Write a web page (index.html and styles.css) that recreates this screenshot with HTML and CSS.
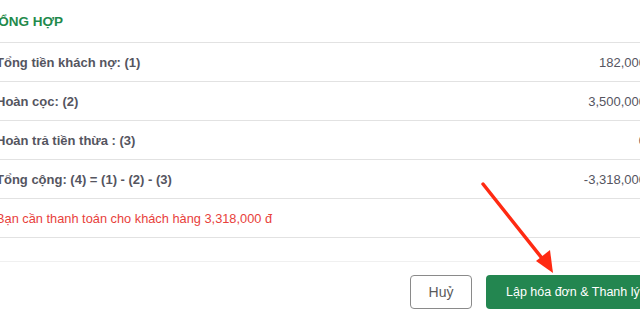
FILE: index.html
```html
<!DOCTYPE html>
<html lang="vi">
<head>
    <meta charset="UTF-8">
    <meta name="viewport" content="width=device-width, initial-scale=1.0">
    <title>Tổng hợp thanh lý</title>
    <link rel="stylesheet" href="styles.css">
</head>
<body>
    <div class="panel">
        <div class="panel-title">TỔNG HỢP</div>

        <div class="summary">
            <div class="summary-row">
                <span class="label">Tổng tiền khách nợ: (1)</span>
                <span class="value">182,000</span>
            </div>
            <div class="summary-row">
                <span class="label">Hoàn cọc: (2)</span>
                <span class="value">3,500,000</span>
            </div>
            <div class="summary-row">
                <span class="label">Hoàn trả tiền thừa : (3)</span>
                <span class="value">0</span>
            </div>
            <div class="summary-row">
                <span class="label">Tổng cộng: (4) = (1) - (2) - (3)</span>
                <span class="value">-3,318,000</span>
            </div>
            <div class="summary-row note">
                <span>Bạn cần thanh toán cho khách hàng 3,318,000 đ</span>
            </div>
            <div class="summary-gap"></div>
        </div>

        <div class="panel-footer">
            <button class="btn btn-cancel" type="button">Huỷ</button>
            <button class="btn btn-primary" type="button">Lập hóa đơn &amp; Thanh lý hợp đồng</button>
        </div>
    </div>

    <!-- annotation arrow pointing at the main button -->
    <svg class="arrow" width="640" height="316" viewBox="0 0 640 316">
        <line x1="483" y1="184" x2="545" y2="262" stroke="#ff2a12" stroke-width="3.5" stroke-linecap="round"/>
        <polygon points="553,273 536,261 550,250" fill="#ff2a12"/>
    </svg>
</body>
</html>
```

FILE: styles.css
```css
/* Page frame: the panel is wider than the window and clipped on both sides */
body {
    margin: 0;
    width: 640px;
    height: 316px;
    overflow: hidden;
    position: relative;
    background: #fff;
    font-family: "Liberation Sans", Arial, Helvetica, sans-serif;
    color: #555;
}

.panel {
    width: 650px;
    margin-left: -4px;
}

/* Title */
.panel-title {
    height: 43px;
    padding-top: 14px;
    box-sizing: border-box;
    text-indent: -6px;
    font-size: 13.5px;
    font-weight: bold;
    color: #1f8a4c;
    border-bottom: 1px solid #e2e2e2;
}

/* Rows */
.summary-row {
    display: flex;
    justify-content: space-between;
    align-items: center;
    height: 38px;
    border-bottom: 1px solid #e2e2e2;
    font-size: 13px;
}

.summary-row .label {
    font-weight: bold;
    color: #55555f;
}

.summary-row .value {
    color: #55555f;
}

.summary-row.note {
    font-size: 12.8px;
    color: #e8413b;
}

.summary-gap {
    height: 23px;
    border-bottom: 1px solid #f0f0f0;
}

/* Footer buttons */
.panel-footer {
    display: flex;
    gap: 14px;
    padding: 13px 0 0 414px;
}

.btn {
    height: 34px;
    font-family: inherit;
    font-size: 14px;
    border-radius: 4px;
    cursor: pointer;
    white-space: nowrap;
    flex-shrink: 0;
}

.btn-cancel {
    width: 62px;
    background: #fff;
    border: 1px solid #8a8a8a;
    color: #5a5a5a;
}

.btn-primary {
    padding: 0 20px;
    font-size: 12.5px;
    background: #238650;
    border: none;
    color: #fff;
}

.arrow {
    position: absolute;
    left: 0;
    top: 0;
    pointer-events: none;
}
```
